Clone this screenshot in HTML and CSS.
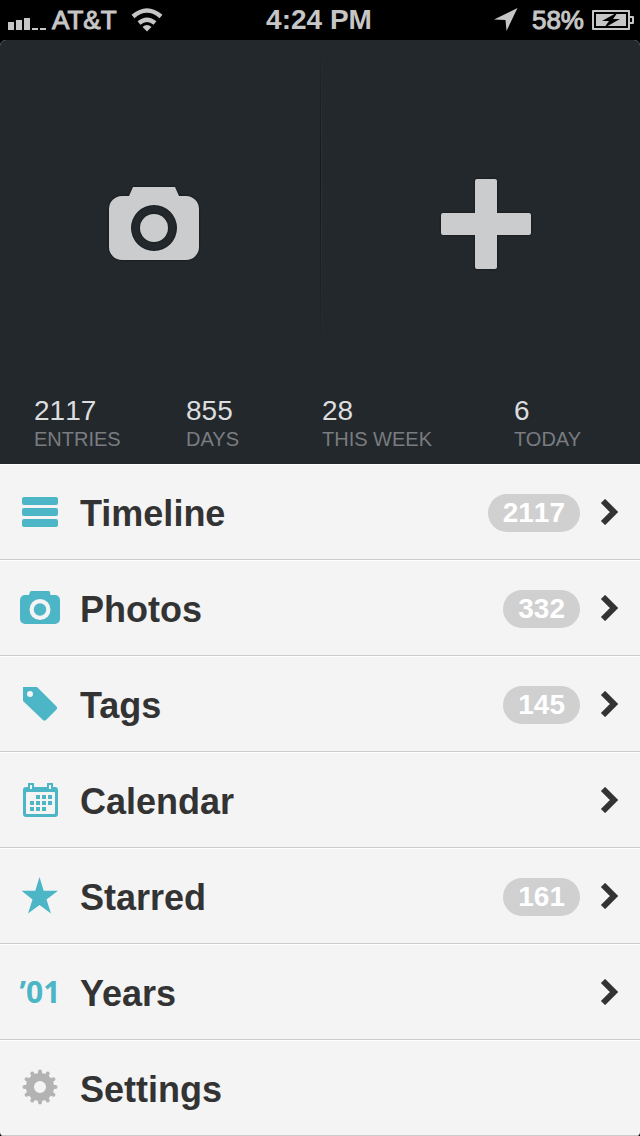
FILE: index.html
```html
<!DOCTYPE html>
<html lang="en">
<head>
<meta charset="utf-8">
<meta name="viewport" content="width=device-width">
<title>Journal</title>
<link rel="stylesheet" href="styles.css">
</head>
<body>
<header class="status">
  <div class="status-side">
    <svg class="signal" width="38" height="18" viewBox="0 0 38 18" role="img" aria-label="Signal"><path d="M0 10h6v8H0zM8 8h6v10H8zM16 6h6v12h-6zM24 16h6v2h-6zM32 16h6v2h-6z"/></svg>
    <span class="status-text">AT&amp;T</span>
    <svg class="wifi" width="32" height="24" viewBox="0 0 32 24" role="img" aria-label="Wi-Fi"><path d="M2 8.500Q16-3.500 30 8.500M8 15Q16 8.500 24 15" fill="none" stroke="#c6c6c6" stroke-width="4.500"/><path d="M11.500 19Q16 15 20.500 19L16 23.500z"/></svg>
  </div>
  <time class="clock">4:24 PM</time>
  <div class="status-side status-end">
    <svg width="24" height="24" viewBox="0 0 24 24" role="img" aria-label="Location"><path d="M23.500 0L12.500 23 11.500 12 0 11.500z"/></svg>
    <span class="status-text percent">58%</span>
    <svg class="battery" width="42" height="20" viewBox="0 0 42 20" role="img" aria-label="Charging"><path fill-rule="evenodd" d="M1 0h36q1 0 1 1v5h3q1 0 1 1v6q0 1-1 1h-3v5q0 1-1 1H1q-1 0-1-1V1q0-1 1-1zM2 2v16h34V2zM38 8v4h2V8z"/><path d="M4 4h30v12H4z"/><path d="M26 2L10 11h7l-5 7L28 9h-7z" fill="#000"/></svg>
  </div>
</header>
<main class="panel">
  <section class="hero">
    <div class="actions">
      <button class="action action-photo" type="button" aria-label="New photo entry">
        <svg width="90" height="90" viewBox="0 0 90 90"><path fill-rule="evenodd" d="M24 8h42l4 9h7a13 13 0 0 1 13 13v38a13 13 0 0 1-13 13H13A13 13 0 0 1 0 68V30a13 13 0 0 1 13-13h7zM45 26a23 23 0 1 0 0 46 23 23 0 1 0 0-46z"/><circle cx="45" cy="49" r="14"/></svg>
      </button>
      <button class="action action-new" type="button" aria-label="New entry">
        <svg width="90" height="90" viewBox="0 0 90 90"><rect x="34" width="22" height="90" rx="2"/><rect y="34" width="90" height="22" rx="2"/></svg>
      </button>
    </div>
    <dl class="stats">
      <div class="stat"><dt>ENTRIES</dt><dd>2117</dd></div>
      <div class="stat"><dt>DAYS</dt><dd>855</dd></div>
      <div class="stat"><dt>THIS WEEK</dt><dd>28</dd></div>
      <div class="stat"><dt>TODAY</dt><dd>6</dd></div>
    </dl>
  </section>
  <nav class="menu">
    <a class="row" href="#timeline">
      <svg class="icon" viewBox="0 0 40 40"><rect x="2" y="5" width="36" height="8" rx="2"/><rect x="2" y="16" width="36" height="8" rx="2"/><rect x="2" y="27" width="36" height="8" rx="2"/></svg>
      <span class="label">Timeline</span><span class="badge">2117</span>
      <svg class="chevron" viewBox="0 0 20 26"><path d="M3 2l11 11L3 24"/></svg>
    </a>
    <a class="row" href="#photos">
      <svg class="icon" viewBox="0 0 40 40"><path fill-rule="evenodd" d="M11 3h18q1 0 1.500 4H35a5 5 0 0 1 5 5v19a5 5 0 0 1-5 5H5a5 5 0 0 1-5-5V12a5 5 0 0 1 5-5h4q1-4 2-4zM20 11a10 10 0 1 0 0 21 10 10 0 1 0 0-21z"/><circle cx="20" cy="21.500" r="6.200"/></svg>
      <span class="label">Photos</span><span class="badge">332</span>
      <svg class="chevron" viewBox="0 0 20 26"><path d="M3 2l11 11L3 24"/></svg>
    </a>
    <a class="row" href="#tags">
      <svg class="icon" viewBox="0 0 40 40"><path fill-rule="evenodd" d="M3 3h14l19.500 19.500q1.500 1.500 0 3L26 36q-1.500 1.500-3 0L3 17zM10 7a3 3 0 1 0 0 6 3 3 0 1 0 0-6z"/></svg>
      <span class="label">Tags</span><span class="badge">145</span>
      <svg class="chevron" viewBox="0 0 20 26"><path d="M3 2l11 11L3 24"/></svg>
    </a>
    <a class="row" href="#calendar">
      <svg class="icon" viewBox="0 0 40 40"><path fill-rule="evenodd" d="M8 3h6v4h13V3h6v4h2a3 3 0 0 1 3 3v24a3 3 0 0 1-3 3H6a3 3 0 0 1-3-3V10a3 3 0 0 1 3-3h2zM10 5v4h2V5zM29 5v4h2V5zM7 12q-1 0-1 1v20q0 1 1 1h27q1 0 1-1V13q0-1-1-1z"/><path d="M16 15h4v4h-4zM22 15h4v4h-4zM28 15h4v4h-4zM10 21h4v4h-4zM16 21h4v4h-4zM22 21h4v4h-4zM28 21h4v4h-4zM10 27h4v4h-4zM16 27h4v4h-4zM22 27h4v4h-4z"/></svg>
      <span class="label">Calendar</span>
      <svg class="chevron" viewBox="0 0 20 26"><path d="M3 2l11 11L3 24"/></svg>
    </a>
    <a class="row" href="#starred">
      <svg class="icon" viewBox="0 0 40 40"><path d="M19.500 1l4.200 13.700H38L26.500 23.500 31 37.500 19.500 29 8 37.500 12.500 23.500 1.500 14.700h13.800z"/></svg>
      <span class="label">Starred</span><span class="badge">161</span>
      <svg class="chevron" viewBox="0 0 20 26"><path d="M3 2l11 11L3 24"/></svg>
    </a>
    <a class="row" href="#years">
      <span class="icon year-mark" aria-hidden="true">’01</span>
      <span class="label">Years</span>
      <svg class="chevron" viewBox="0 0 20 26"><path d="M3 2l11 11L3 24"/></svg>
    </a>
    <a class="row" href="#settings">
      <svg class="icon icon-settings" viewBox="-20 -19 40 40"><circle r="10" fill="none" stroke-width="8"/><path stroke-width="4" stroke-linecap="round" d="M12 0h3.500M10.400 6l3 1.750M6 10.400L7.750 13.400M0 12v3.500M-6 10.400L-7.750 13.400M-10.400 6L-13.400 7.750M-12 0h-3.500M-10.400-6L-13.400-7.750M-6-10.400L-7.750-13.400M0-12v-3.500M6-10.400L7.750-13.400M10.400-6L13.400-7.750"/></svg>
      <span class="label">Settings</span>
    </a>
  </nav>
</main>
</body>
</html>
```
FILE: styles.css
```css
* { box-sizing: border-box; }
body {
  margin: 0;
  background: #000;
  font-family: "Liberation Sans", Arial, sans-serif;
}
svg { display: block; flex: none; }

.status {
  display: grid;
  grid-template-columns: 1fr auto 1fr;
  align-items: center;
  height: 40px;
  padding: 0 6px 0 8px;
  color: #c6c6c6;
  fill: #c6c6c6;
}
.status-side { display: flex; align-items: center; gap: 6px; }
.status-end { justify-content: flex-end; gap: 8px; }
.status-text {
  font-size: 26px;
  line-height: 40px;
  -webkit-text-stroke: 1px #c6c6c6;
}
.percent { margin-left: 6px; }
.signal { margin-top: 2px; }
.wifi { margin-left: 8px; }
.clock { margin-right: 4px; font-size: 28px; font-weight: bold; line-height: 40px; }

.panel { overflow: hidden; border-radius: 6px 6px 4px 4px; background: #f4f4f4; }
.hero { background: #23282c; padding-bottom: 13px; }
.actions {
  display: grid;
  grid-template-columns: 1fr 1fr;
}
.action {
  display: flex;
  justify-content: center;
  padding: 139px 0 91px;
  border: 0;
  background: none;
  fill: #cbccce;
}
.action svg { overflow: visible; filter: drop-shadow(0 0 1px #0f1213); }
.action-photo { padding-right: 12px; }
.action-new {
  padding-left: 12px;
  background:
    linear-gradient(#23282c, #14181a 40%, #23282c) 0 0 / 1px 100% no-repeat,
    linear-gradient(#23282c, #2c3236 40%, #23282c) 1px 0 / 1px 100% no-repeat;
}

.stats {
  display: grid;
  grid-template-columns: 152fr 136fr 192fr 126fr;
  margin: 0;
  padding: 34px 0 0 34px;
}
.stat { display: flex; flex-direction: column-reverse; }
.stat dt { font-size: 20px; line-height: 24px; color: #797c80; }
.stat dd { margin: 0; font-size: 28px; font-kerning: none; line-height: 33px; color: #dcdddf; }

.row {
  display: flex;
  align-items: center;
  gap: 20px;
  min-height: 96px;
  padding: 0 20px;
  border-top: 1px solid #fff;
  border-bottom: 1px solid #cbcbcb;
  color: #333;
  text-decoration: none;
}
.icon { width: 40px; height: 40px; fill: #4cb6c7; }
.icon-settings { fill: none; stroke: #b3b3b3; }
.year-mark {
  display: flex;
  flex: none;
  align-items: center;
  justify-content: center;
  color: #4cb6c7;
  font: bold 30px/40px "Noto Sans", sans-serif;
}
.label { flex: 1; padding-top: 3px; font-size: 36px; font-weight: bold; line-height: 40px; }
.badge {
  margin-top: 2px;
  padding: 0 15px;
  border-radius: 19px;
  background: #d0d0d0;
  color: #fff;
  font-size: 28px;
  font-weight: bold;
  font-kerning: none;
  line-height: 38px;
}
.chevron { width: 20px; height: 26px; fill: none; stroke: #333; stroke-width: 6; }
```
